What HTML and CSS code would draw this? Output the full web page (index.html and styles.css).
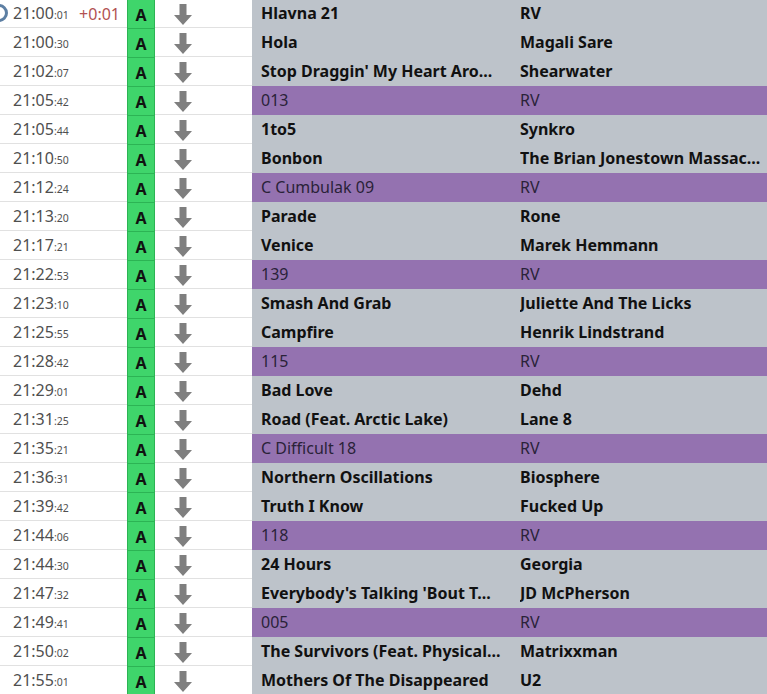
FILE: index.html
```html
<!DOCTYPE html>
<html>
<head>
<meta charset="utf-8">
<link rel="stylesheet" href="styles.css">
</head>
<body>
<div class="list">
  <div class="row">
    <div class="time"><svg class="ring" width="20" height="20" viewBox="0 0 20 20"><circle cx="10" cy="10" r="7.5" fill="none" stroke="#5d7fa3" stroke-width="3"/></svg><span>21:00<small>:01</small></span><span class="delta">+0:01</span></div>
    <div class="src">A</div>
    <div class="act"><svg width="18" height="21" viewBox="0 0 18 21"><path d="M5.5 0h7v11H18L9 21 0 11h5.5z" fill="#7f7f7f"/></svg></div>
    <div class="title">Hlavna 21</div><div class="artist">RV</div>
  </div>
  <div class="row">
    <div class="time"><span>21:00<small>:30</small></span></div>
    <div class="src">A</div>
    <div class="act"><svg width="18" height="21" viewBox="0 0 18 21"><path d="M5.5 0h7v11H18L9 21 0 11h5.5z" fill="#7f7f7f"/></svg></div>
    <div class="title">Hola</div><div class="artist">Magali Sare</div>
  </div>
  <div class="row">
    <div class="time"><span>21:02<small>:07</small></span></div>
    <div class="src">A</div>
    <div class="act"><svg width="18" height="21" viewBox="0 0 18 21"><path d="M5.5 0h7v11H18L9 21 0 11h5.5z" fill="#7f7f7f"/></svg></div>
    <div class="title">Stop Draggin' My Heart Aro...</div><div class="artist">Shearwater</div>
  </div>
  <div class="row jingle">
    <div class="time"><span>21:05<small>:42</small></span></div>
    <div class="src">A</div>
    <div class="act"><svg width="18" height="21" viewBox="0 0 18 21"><path d="M5.5 0h7v11H18L9 21 0 11h5.5z" fill="#7f7f7f"/></svg></div>
    <div class="title">013</div><div class="artist">RV</div>
  </div>
  <div class="row">
    <div class="time"><span>21:05<small>:44</small></span></div>
    <div class="src">A</div>
    <div class="act"><svg width="18" height="21" viewBox="0 0 18 21"><path d="M5.5 0h7v11H18L9 21 0 11h5.5z" fill="#7f7f7f"/></svg></div>
    <div class="title">1to5</div><div class="artist">Synkro</div>
  </div>
  <div class="row">
    <div class="time"><span>21:10<small>:50</small></span></div>
    <div class="src">A</div>
    <div class="act"><svg width="18" height="21" viewBox="0 0 18 21"><path d="M5.5 0h7v11H18L9 21 0 11h5.5z" fill="#7f7f7f"/></svg></div>
    <div class="title">Bonbon</div><div class="artist">The Brian Jonestown Massac...</div>
  </div>
  <div class="row jingle">
    <div class="time"><span>21:12<small>:24</small></span></div>
    <div class="src">A</div>
    <div class="act"><svg width="18" height="21" viewBox="0 0 18 21"><path d="M5.5 0h7v11H18L9 21 0 11h5.5z" fill="#7f7f7f"/></svg></div>
    <div class="title">C Cumbulak 09</div><div class="artist">RV</div>
  </div>
  <div class="row">
    <div class="time"><span>21:13<small>:20</small></span></div>
    <div class="src">A</div>
    <div class="act"><svg width="18" height="21" viewBox="0 0 18 21"><path d="M5.5 0h7v11H18L9 21 0 11h5.5z" fill="#7f7f7f"/></svg></div>
    <div class="title">Parade</div><div class="artist">Rone</div>
  </div>
  <div class="row">
    <div class="time"><span>21:17<small>:21</small></span></div>
    <div class="src">A</div>
    <div class="act"><svg width="18" height="21" viewBox="0 0 18 21"><path d="M5.5 0h7v11H18L9 21 0 11h5.5z" fill="#7f7f7f"/></svg></div>
    <div class="title">Venice</div><div class="artist">Marek Hemmann</div>
  </div>
  <div class="row jingle">
    <div class="time"><span>21:22<small>:53</small></span></div>
    <div class="src">A</div>
    <div class="act"><svg width="18" height="21" viewBox="0 0 18 21"><path d="M5.5 0h7v11H18L9 21 0 11h5.5z" fill="#7f7f7f"/></svg></div>
    <div class="title">139</div><div class="artist">RV</div>
  </div>
  <div class="row">
    <div class="time"><span>21:23<small>:10</small></span></div>
    <div class="src">A</div>
    <div class="act"><svg width="18" height="21" viewBox="0 0 18 21"><path d="M5.5 0h7v11H18L9 21 0 11h5.5z" fill="#7f7f7f"/></svg></div>
    <div class="title">Smash And Grab</div><div class="artist">Juliette And The Licks</div>
  </div>
  <div class="row">
    <div class="time"><span>21:25<small>:55</small></span></div>
    <div class="src">A</div>
    <div class="act"><svg width="18" height="21" viewBox="0 0 18 21"><path d="M5.5 0h7v11H18L9 21 0 11h5.5z" fill="#7f7f7f"/></svg></div>
    <div class="title">Campfire</div><div class="artist">Henrik Lindstrand</div>
  </div>
  <div class="row jingle">
    <div class="time"><span>21:28<small>:42</small></span></div>
    <div class="src">A</div>
    <div class="act"><svg width="18" height="21" viewBox="0 0 18 21"><path d="M5.5 0h7v11H18L9 21 0 11h5.5z" fill="#7f7f7f"/></svg></div>
    <div class="title">115</div><div class="artist">RV</div>
  </div>
  <div class="row">
    <div class="time"><span>21:29<small>:01</small></span></div>
    <div class="src">A</div>
    <div class="act"><svg width="18" height="21" viewBox="0 0 18 21"><path d="M5.5 0h7v11H18L9 21 0 11h5.5z" fill="#7f7f7f"/></svg></div>
    <div class="title">Bad Love</div><div class="artist">Dehd</div>
  </div>
  <div class="row">
    <div class="time"><span>21:31<small>:25</small></span></div>
    <div class="src">A</div>
    <div class="act"><svg width="18" height="21" viewBox="0 0 18 21"><path d="M5.5 0h7v11H18L9 21 0 11h5.5z" fill="#7f7f7f"/></svg></div>
    <div class="title">Road (Feat. Arctic Lake)</div><div class="artist">Lane 8</div>
  </div>
  <div class="row jingle">
    <div class="time"><span>21:35<small>:21</small></span></div>
    <div class="src">A</div>
    <div class="act"><svg width="18" height="21" viewBox="0 0 18 21"><path d="M5.5 0h7v11H18L9 21 0 11h5.5z" fill="#7f7f7f"/></svg></div>
    <div class="title">C Difficult 18</div><div class="artist">RV</div>
  </div>
  <div class="row">
    <div class="time"><span>21:36<small>:31</small></span></div>
    <div class="src">A</div>
    <div class="act"><svg width="18" height="21" viewBox="0 0 18 21"><path d="M5.5 0h7v11H18L9 21 0 11h5.5z" fill="#7f7f7f"/></svg></div>
    <div class="title">Northern Oscillations</div><div class="artist">Biosphere</div>
  </div>
  <div class="row">
    <div class="time"><span>21:39<small>:42</small></span></div>
    <div class="src">A</div>
    <div class="act"><svg width="18" height="21" viewBox="0 0 18 21"><path d="M5.5 0h7v11H18L9 21 0 11h5.5z" fill="#7f7f7f"/></svg></div>
    <div class="title">Truth I Know</div><div class="artist">Fucked Up</div>
  </div>
  <div class="row jingle">
    <div class="time"><span>21:44<small>:06</small></span></div>
    <div class="src">A</div>
    <div class="act"><svg width="18" height="21" viewBox="0 0 18 21"><path d="M5.5 0h7v11H18L9 21 0 11h5.5z" fill="#7f7f7f"/></svg></div>
    <div class="title">118</div><div class="artist">RV</div>
  </div>
  <div class="row">
    <div class="time"><span>21:44<small>:30</small></span></div>
    <div class="src">A</div>
    <div class="act"><svg width="18" height="21" viewBox="0 0 18 21"><path d="M5.5 0h7v11H18L9 21 0 11h5.5z" fill="#7f7f7f"/></svg></div>
    <div class="title">24 Hours</div><div class="artist">Georgia</div>
  </div>
  <div class="row">
    <div class="time"><span>21:47<small>:32</small></span></div>
    <div class="src">A</div>
    <div class="act"><svg width="18" height="21" viewBox="0 0 18 21"><path d="M5.5 0h7v11H18L9 21 0 11h5.5z" fill="#7f7f7f"/></svg></div>
    <div class="title">Everybody's Talking 'Bout T...</div><div class="artist">JD McPherson</div>
  </div>
  <div class="row jingle">
    <div class="time"><span>21:49<small>:41</small></span></div>
    <div class="src">A</div>
    <div class="act"><svg width="18" height="21" viewBox="0 0 18 21"><path d="M5.5 0h7v11H18L9 21 0 11h5.5z" fill="#7f7f7f"/></svg></div>
    <div class="title">005</div><div class="artist">RV</div>
  </div>
  <div class="row">
    <div class="time"><span>21:50<small>:02</small></span></div>
    <div class="src">A</div>
    <div class="act"><svg width="18" height="21" viewBox="0 0 18 21"><path d="M5.5 0h7v11H18L9 21 0 11h5.5z" fill="#7f7f7f"/></svg></div>
    <div class="title">The Survivors (Feat. Physical...</div><div class="artist">Matrixxman</div>
  </div>
  <div class="row">
    <div class="time"><span>21:55<small>:01</small></span></div>
    <div class="src">A</div>
    <div class="act"><svg width="18" height="21" viewBox="0 0 18 21"><path d="M5.5 0h7v11H18L9 21 0 11h5.5z" fill="#7f7f7f"/></svg></div>
    <div class="title">Mothers Of The Disappeared</div><div class="artist">U2</div>
  </div>
</div>
</body>
</html>
```
FILE: styles.css
```css
html, body {
  margin: 0;
  padding: 0;
  background: #ffffff;
  overflow: hidden;
}
body {
  font-family: "Noto Sans", "Open Sans", sans-serif;
  font-size: 16px;
  color: #222;
}
.list {
  margin-top: -1px;
  width: 767px;
}
.row {
  position: relative;
  display: grid;
  grid-template-columns: 127px 28px 97px 268px 1fr;
  height: 28px;
  border-bottom: 1px solid #e1e1e1;
}
.time {
  display: flex;
  align-items: center;
  justify-content: space-between;
  padding: 0 7px 0 13px;
  color: #4f4f4f;
  font-size: 16px;
  line-height: 28px;
}
.time small {
  font-size: 10.5px;
}
.ring {
  position: absolute;
  left: -11px;
  top: 4px;
}
.delta {
  color: #b25252;
}
.src {
  box-sizing: border-box;
  background: #3fd56b;
  border: 1px solid #2cb454;
  border-bottom: none;
  display: flex;
  align-items: center;
  justify-content: center;
  font-weight: 700;
  font-size: 16px;
  color: #111;
  margin-bottom: -1px;
}
.act {
  display: flex;
  align-items: center;
  padding-left: 19px;
}
.title, .artist {
  background: #bdc3ca;
  font-weight: 700;
  color: #111;
  line-height: 28px;
  white-space: nowrap;
  overflow: hidden;
}
.title {
  padding: 0 8px 0 9px;
}
.artist {
  padding: 0;
}
.jingle .title, .jingle .artist {
  background: #9472b0;
  font-weight: 400;
  color: #2a2238;
}
```
